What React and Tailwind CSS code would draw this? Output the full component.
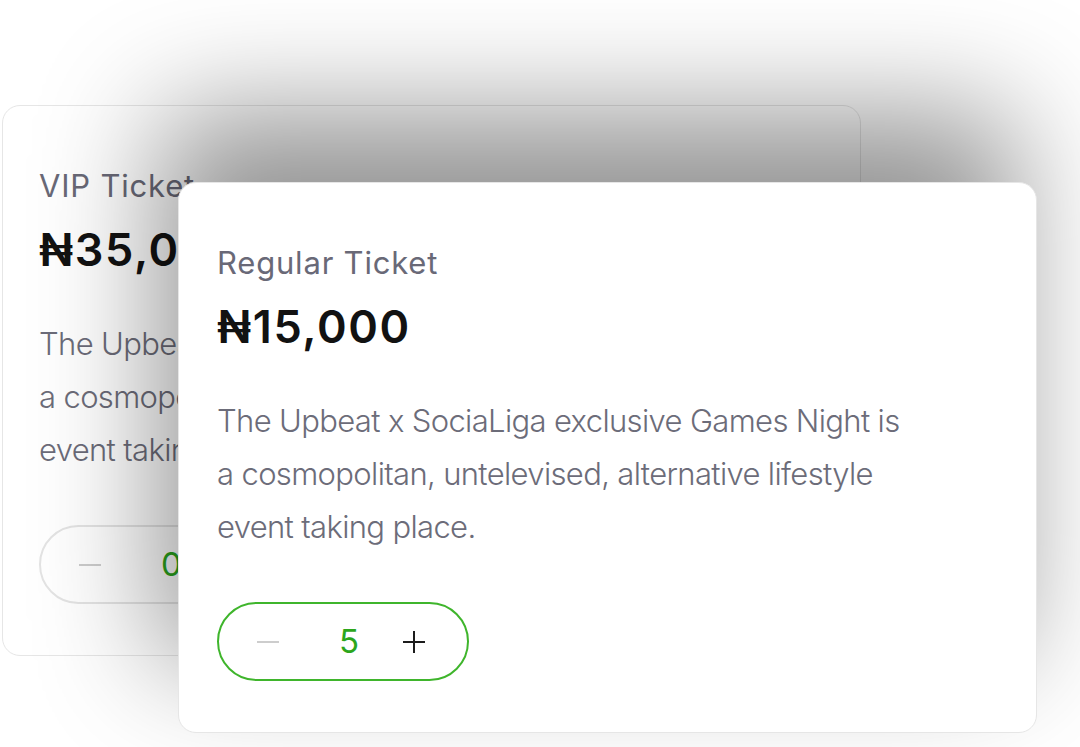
import React from "react";

const desc =
  "The Upbeat x SociaLiga exclusive Games Night is a cosmopolitan, untelevised, alternative lifestyle event taking place.";

function Stepper({ count, active }) {
  return (
    <div
      className={
        active
          ? "flex items-center w-[252px] h-[79px] rounded-full border-2 border-[#3fb52c] pl-[38px]"
          : "flex items-center w-[252px] h-[79px] rounded-full border-2 border-[#e4e4e4] pl-[38px]"
      }
    >
      {/* minus */}
      <svg width="22" height="22" viewBox="0 0 22 22">
        <path d="M0 11h22" stroke="#cdcdcd" strokeWidth="2" />
      </svg>
      <span className="ml-[60px] w-[20px] text-[33px] leading-none text-[#2ca61c] font-normal">
        {count}
      </span>
      {/* plus */}
      <svg className="ml-[44px]" width="22" height="22" viewBox="0 0 22 22">
        <path d="M0 11h22M11 0v22" stroke="#1c1c1c" strokeWidth="2" />
      </svg>
    </div>
  );
}

function TicketCard({ name, price, count, active, className }) {
  return (
    <div
      className={
        "w-[859px] h-[551px] rounded-[18px] bg-white border border-[#e6e6e6] pt-[62px] " +
        className
      }
    >
      <div className="text-[31px] leading-[36px] text-[#696977] font-normal tracking-[0.8px]">
        {name}
      </div>
      <div className="mt-[20px] text-[45px] leading-[52px] text-[#121212] font-semibold tracking-[1.6px]">
        {price}
      </div>
      <p className="mt-[41px] w-[700px] text-[31px] leading-[53px] text-[#6c6c79] font-light tracking-[-0.65px]">
        {desc}
      </p>
      <div className="mt-[49px]">
        <Stepper count={count} active={active} />
      </div>
    </div>
  );
}

export default function App() {
  return (
    <div
      className="w-[1080px] h-[747px] overflow-hidden bg-white pt-[105px] pl-[2px]"
      style={{ fontFamily: "Inter, 'Noto Sans', sans-serif" }}
    >
      <div className="grid">
        {/* VIP card (behind) */}
        <TicketCard
          name="VIP Ticket"
          price="₦35,000"
          count={0}
          active={false}
          className="col-start-1 row-start-1 pl-[36px]"
        />
        {/* Regular card (front) */}
        <TicketCard
          name="Regular Ticket"
          price="₦15,000"
          count={5}
          active={true}
          className="relative z-10 col-start-1 row-start-1 ml-[176px] mt-[77px] pl-[38px] shadow-[-20px_-70px_120px_rgba(0,0,0,0.42)]"
        />
      </div>
    </div>
  );
}
